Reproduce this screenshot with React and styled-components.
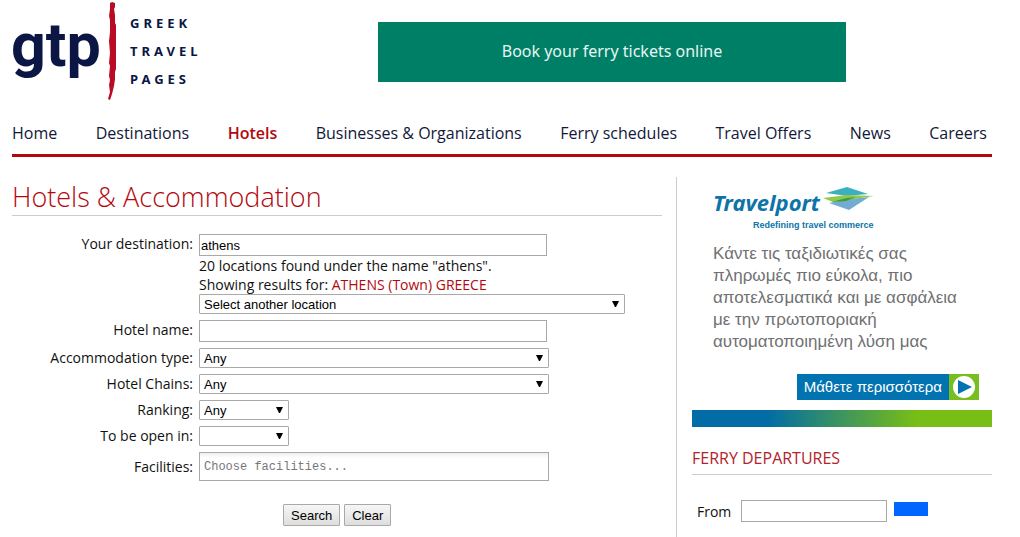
import React, { useState } from 'react'
import styled, { createGlobalStyle } from 'styled-components'

const GlobalStyle = createGlobalStyle`
  * {
    box-sizing: border-box;
  }
  body {
    margin: 0;
    background: #fff;
    color: #111;
    font-family: 'Open Sans', sans-serif;
    font-size: 14px;
    line-height: 19px;
  }
`
const Page = styled.div`
  padding: 0 28px 0 12px;
`
const Header = styled.header`
  display: flex;
  align-items: flex-start;
  gap: 174px;
  height: 110px;
`
const LogoLink = styled.a`
  flex: none;
  svg {
    display: block;
  }
`
const FerryBanner = styled.a`
  flex: 0 1 468px;
  margin-top: 22px;
  padding: 17px 0 19px;
  background: #007f67;
  color: #e6f5f0;
  font-family: 'Noto Sans', sans-serif;
  font-size: 16px;
  line-height: 24px;
  text-align: center;
  text-decoration: none;
`
const Nav = styled.nav`
  display: flex;
  flex-wrap: wrap;
  justify-content: space-between;
  padding: 12px 5px 10px 0;
  border-bottom: 3px solid #b3070e;
`
const NavLink = styled.a`
  color: ${(props) => (props.$active ? '#b3070e' : '#11183a')};
  font-size: 16px;
  font-weight: ${(props) => (props.$active ? 600 : 400)};
  line-height: 22px;
  text-decoration: none;
`
const Columns = styled.div`
  display: grid;
  grid-template-columns: minmax(0, 1fr) 316px;
  gap: 14px;
  padding-top: 20px;
`
const Title = styled.h1`
  margin: 0 0 18px;
  padding-top: 2px;
  border-bottom: 1px solid #ccc;
  color: #b3070e;
  font-size: 27px;
  font-weight: 300;
  line-height: 36px;
`
const SearchForm = styled.form`
  display: grid;
  grid-template-columns: 181px minmax(0, 1fr);
  gap: 6px;
`
const Label = styled.label`
  padding-top: ${(props) => (props.$tall ? '5px' : '0')};
  text-align: right;
`
const Field = styled.div`
  p {
    margin: 0;
  }
  strong {
    color: #b3070e;
    font-weight: 500;
  }
`
const TextBox = styled.input`
  display: block;
  width: ${(props) => props.$width || 348}px;
  max-width: 100%;
  height: ${(props) => (props.$tall ? 29 : 22)}px;
  padding: 0 ${(props) => (props.$tall ? 4 : 1)}px;
  border: 1px solid #a9a9a9;
  border-radius: 0;
  background: ${(props) => (props.$tall ? 'linear-gradient(#eee 0, #fff 5px)' : '#fff')};
  color: #000;
  font-family: ${(props) => (props.$tall ? "'Liberation Mono', monospace" : "'Liberation Sans', sans-serif")};
  font-size: ${(props) => (props.$tall ? 12 : 13)}px;
  &::placeholder {
    color: #777;
  }
`
const SelectWrap = styled.div`
  position: relative;
  width: ${(props) => props.$width}px;
  max-width: 100%;
  svg {
    position: absolute;
    top: 7px;
    right: 6px;
    pointer-events: none;
  }
`
const Select = styled.select`
  appearance: none;
  display: block;
  width: 100%;
  height: 20px;
  padding: 0 4px;
  border: 1px solid #a9a9a9;
  border-radius: 1px;
  background: #fff;
  color: #000;
  font-family: 'Liberation Sans', sans-serif;
  font-size: 13px;
`
const Buttons = styled.div`
  display: flex;
  grid-column: 2;
  gap: 4px;
  padding: 17px 0 11px 84px;
`
const Button = styled.button`
  height: 22px;
  padding: 0 7px;
  border: 1px solid #a9a9a9;
  border-radius: 1px;
  background: linear-gradient(#f6f6f6, #dedede);
  color: #000;
  font-family: 'Liberation Sans', sans-serif;
  font-size: 13px;
`
const Sidebar = styled.aside`
  padding-left: 15px;
  border-left: 1px solid #ccc;
`
const Ad = styled.section`
  padding-top: 8px;
  > svg {
    display: block;
    margin-left: 21px;
  }
  > p {
    margin: 12px 21px 21px;
    color: #707072;
    font-family: 'Liberation Sans', sans-serif;
    font-size: 17px;
    line-height: 22px;
  }
`
const AdLink = styled.a`
  display: flex;
  width: max-content;
  margin: 0 13px 10px auto;
  background: #0273b1;
  color: #fff;
  font-family: 'Liberation Sans', sans-serif;
  font-size: 15px;
  line-height: 26px;
  text-decoration: none;
  span {
    padding: 0 7px;
  }
  svg {
    display: block;
  }
`
const Stripe = styled.div`
  height: 17px;
  background: linear-gradient(90deg, #026ca6 25%, #78be16 75%);
`
const SideTitle = styled.h2`
  margin: 20px 0 25px;
  padding-bottom: 5px;
  border-bottom: 1px solid #ccc;
  color: #b3232b;
  font-size: 16px;
  font-weight: 400;
  line-height: 22px;
`
const FerryForm = styled.form`
  display: flex;
  align-items: center;
  padding-left: 5px;
  label {
    margin-right: 10px;
  }
`
const GoButton = styled.button`
  width: 34px;
  height: 14px;
  margin: 0 0 4px 7px;
  padding: 0;
  border: 0;
  background: #06f;
`

function GtpLogo() {
  return (
    <svg width="192" height="104" viewBox="12 0 192 104" role="img" aria-label="GTP Greek Travel Pages">
      <g fill="#0b1645" fontWeight="700">
        <text x="11" y="66" fontFamily="Roboto, sans-serif" fontSize="61">gtp</text>
        <g fontFamily="'Noto Sans', sans-serif" fontSize="13" letterSpacing="4">
          <text x="130" y="28">GREEK</text>
          <text x="130" y="56">TRAVEL</text>
          <text x="130" y="84">PAGES</text>
        </g>
      </g>
      <path
        fill="#bb0a25"
        d="M110 3l2-1 3 1v4l-1 2 1 6v8l1 2v44l-1 3v7l-1 7-2 8-2 6-2-1 2-7-1-7 1-5-1-4 1-10-1-3 1-10-1-12 1-9v-12l-1-4 1-7z"
      />
    </svg>
  )
}

function TravelportLogo() {
  return (
    <svg width="166" height="46" viewBox="713 185 166 46" role="img" aria-label="Travelport Redefining travel commerce">
      <g fill="#0c74a8" fontWeight="700">
        <text x="713" y="211" fontFamily="'Noto Sans', sans-serif" fontSize="22" fontStyle="italic">Travelport</text>
        <text x="753" y="228" fontFamily="'Liberation Sans', sans-serif" fontSize="9">Redefining travel commerce</text>
      </g>
      <path fill="#3db0c0" d="M826 193l21-6 21 7-21 2z" />
      <path fill="#72abd3" d="M829 203l20-4 20-2-20 13z" />
      <path fill="#8fcb4a" d="M823 198l24-3 27 1-27 4-14 2z" />
      <path fill="#3f9c35" d="M831 202l16-4 9-1-10 4z" />
    </svg>
  )
}

function DropDown({ id, width, text }) {
  return (
    <SelectWrap $width={width}>
      <Select id={id} aria-label={text || 'Month'}>
        <option>{text}</option>
      </Select>
      <svg width="7" height="6" viewBox="0 0 7 6" aria-hidden="true">
        <path d="M0 0h7L4 6H3z" />
      </svg>
    </SelectWrap>
  )
}

const links = [
  'Home',
  'Destinations',
  'Hotels',
  'Businesses & Organizations',
  'Ferry schedules',
  'Travel Offers',
  'News',
  'Careers',
]

const dropDowns = [
  { id: 'type', label: 'Accommodation type:', text: 'Any', width: 350 },
  { id: 'chains', label: 'Hotel Chains:', text: 'Any', width: 350 },
  { id: 'ranking', label: 'Ranking:', text: 'Any', width: 90 },
  { id: 'open', label: 'To be open in:', text: '', width: 90 },
]

export default function App() {
  const [destination, setDestination] = useState('athens')
  return (
    <>
      <GlobalStyle />
      <Page>
        <Header>
          <LogoLink href="#home">
            <GtpLogo />
          </LogoLink>
          <FerryBanner href="#ferries">Book your ferry tickets online</FerryBanner>
        </Header>
        <Nav>
          {links.map((link) => (
            <NavLink key={link} href="#nav" $active={link === 'Hotels'}>
              {link}
            </NavLink>
          ))}
        </Nav>
        <Columns>
          <main>
            <Title>Hotels &amp; Accommodation</Title>
            <SearchForm onSubmit={(e) => e.preventDefault()}>
              <Label htmlFor="destination">Your destination:</Label>
              <Field>
                <TextBox id="destination" value={destination} onChange={(e) => setDestination(e.target.value)} />
                <p>20 locations found under the name &quot;athens&quot;.</p>
                <p>
                  Showing results for: <strong>ATHENS (Town) GREECE</strong>
                </p>
                <DropDown id="location" width={426} text="Select another location" />
              </Field>
              <Label htmlFor="name">Hotel name:</Label>
              <TextBox id="name" />
              {dropDowns.map((item) => (
                <React.Fragment key={item.id}>
                  <Label htmlFor={item.id}>{item.label}</Label>
                  <DropDown id={item.id} width={item.width} text={item.text} />
                </React.Fragment>
              ))}
              <Label htmlFor="facilities" $tall>
                Facilities:
              </Label>
              <TextBox id="facilities" $tall $width={350} placeholder="Choose facilities..." />
              <Buttons>
                <Button type="submit">Search</Button>
                <Button type="reset">Clear</Button>
              </Buttons>
            </SearchForm>
          </main>
          <Sidebar>
            <Ad>
              <TravelportLogo />
              <p>Κάντε τις ταξιδιωτικές σας πληρωμές πιο εύκολα, πιο αποτελεσματικά και με ασφάλεια με την πρωτοποριακή αυτοματοποιημένη λύση μας</p>
              <AdLink href="#travelport">
                <span>Μάθετε περισσότερα</span>
                <svg width="30" height="26" viewBox="0 0 30 26" aria-hidden="true">
                  <path fill="#78be20" d="M0 0h30v26H0z" />
                  <circle cx="15" cy="13" r="11" fill="#fff" />
                  <path fill="#0273b1" d="M9 6l14 7-14 7z" />
                </svg>
              </AdLink>
              <Stripe />
            </Ad>
            <SideTitle>FERRY DEPARTURES</SideTitle>
            <FerryForm onSubmit={(e) => e.preventDefault()}>
              <label htmlFor="from">From</label>
              <TextBox id="from" $width={146} />
              <GoButton aria-label="Go" />
            </FerryForm>
          </Sidebar>
        </Columns>
      </Page>
    </>
  )
}
